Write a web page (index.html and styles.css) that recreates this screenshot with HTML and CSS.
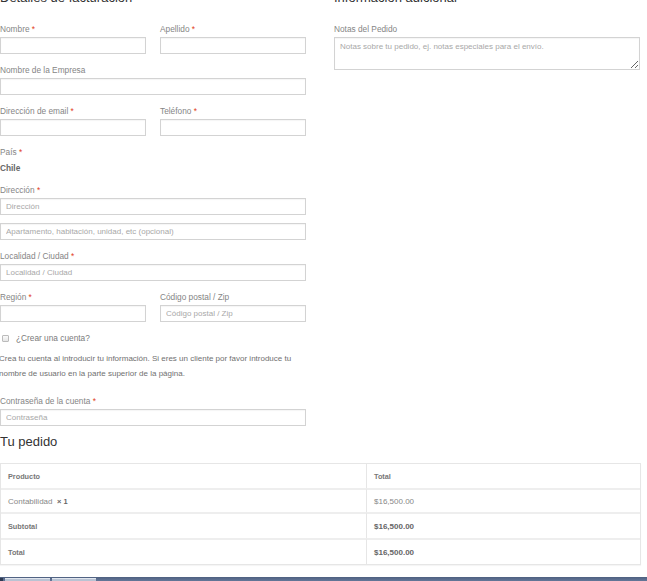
FILE: index.html
```html
<!DOCTYPE html>
<html lang="es">
<head>
  <meta charset="UTF-8">
  <meta name="viewport" content="width=device-width, initial-scale=1.0">
  <title>Finalizar compra</title>
  <link rel="stylesheet" href="styles.css">
</head>
<body>
  <div class="checkout">
    <!-- columnas: facturación / información adicional -->
    <div class="col-set">
      <div class="col billing">
        <h3>Detalles de facturación</h3>

        <div class="row-half">
          <p class="field">
            <label>Nombre <abbr>*</abbr></label>
            <input type="text">
          </p>
          <p class="field">
            <label>Apellido <abbr>*</abbr></label>
            <input type="text">
          </p>
        </div>

        <p class="field">
          <label>Nombre de la Empresa</label>
          <input type="text">
        </p>

        <div class="row-half">
          <p class="field">
            <label>Dirección de email <abbr>*</abbr></label>
            <input type="email">
          </p>
          <p class="field">
            <label>Teléfono <abbr>*</abbr></label>
            <input type="tel">
          </p>
        </div>

        <p class="field">
          <label>País <abbr>*</abbr></label>
          <strong class="country">Chile</strong>
        </p>

        <p class="field address">
          <label>Dirección <abbr>*</abbr></label>
          <input type="text" placeholder="Dirección">
          <input type="text" placeholder="Apartamento, habitación, unidad, etc (opcional)">
        </p>

        <p class="field">
          <label>Localidad / Ciudad <abbr>*</abbr></label>
          <input type="text" placeholder="Localidad / Ciudad">
        </p>

        <div class="row-half">
          <p class="field">
            <label>Región <abbr>*</abbr></label>
            <input type="text">
          </p>
          <p class="field">
            <label>Código postal / Zip</label>
            <input type="text" placeholder="Código postal / Zip">
          </p>
        </div>

        <p class="create-account">
          <input type="checkbox" id="createaccount">
          <label for="createaccount">¿Crear una cuenta?</label>
        </p>

        <p class="account-note">Crea tu cuenta al introducir tu información. Si eres un cliente por favor introduce tu nombre de usuario en la parte superior de la página.</p>

        <p class="field">
          <label>Contraseña de la cuenta <abbr>*</abbr></label>
          <input type="password" placeholder="Contraseña">
        </p>
      </div>

      <div class="col additional">
        <h3>Información adicional</h3>
        <p class="field">
          <label>Notas del Pedido</label>
          <textarea placeholder="Notas sobre tu pedido, ej. notas especiales para el envío."></textarea>
        </p>
      </div>
    </div>

    <!-- resumen del pedido -->
    <h3 class="order-title">Tu pedido</h3>
    <table class="shop-table">
      <thead>
        <tr>
          <th class="product-name">Producto</th>
          <th class="product-total">Total</th>
        </tr>
      </thead>
      <tbody>
        <tr>
          <td class="product-name">Contabilidad&nbsp; <strong>× 1</strong></td>
          <td class="product-total">$16,500.00</td>
        </tr>
      </tbody>
      <tfoot>
        <tr>
          <th>Subtotal</th>
          <td><strong>$16,500.00</strong></td>
        </tr>
        <tr>
          <th>Total</th>
          <td><strong>$16,500.00</strong></td>
        </tr>
      </tfoot>
    </table>
  </div>

  <!-- barra de tareas -->
  <div class="taskbar">
    <span class="task-start"></span>
    <span class="task-tab"></span>
    <span class="task-tab second"></span>
  </div>
</body>
</html>
```

FILE: styles.css
```css
body {
  margin: 0;
  padding: 0;
  overflow: hidden;
  background: #fff;
  font-family: "Liberation Sans", Arial, sans-serif;
  color: #777;
  height: 581px;
  display: flex;
  flex-direction: column;
}

.checkout {
  width: 641px;
}

h3 {
  margin: 0;
  font-size: 13px;
  line-height: 15px;
  font-weight: normal;
  color: #333;
}

/* columnas */
.col-set {
  display: flex;
  gap: 28px;
}

.col {
  width: 306px;
}

.col h3 {
  margin-top: -10px;
  margin-bottom: 18px;
}

.row-half {
  display: grid;
  grid-template-columns: 146px 146px;
  gap: 14px;
}

/* campos */
.field {
  margin: 0 0 10px;
}

.field label {
  display: block;
  font-size: 8.3px;
  line-height: 12px;
  margin-bottom: 2px;
  color: #858585;
}

abbr {
  color: #e2401c;
  text-decoration: none;
}

input[type="text"],
input[type="email"],
input[type="tel"],
input[type="password"],
textarea {
  display: block;
  box-sizing: border-box;
  width: 100%;
  height: 17px;
  margin: 0;
  padding: 0 5px;
  border: 1px solid #d3d3d3;
  box-shadow: inset 0 1px 1px rgba(0, 0, 0, 0.04);
  font-family: inherit;
  font-size: 8px;
  color: #555;
  background: #fff;
}

::placeholder {
  color: #a8a8a8;
}

textarea {
  height: 33px;
  padding: 4px 5px;
  line-height: 10px;
}

.country {
  display: block;
  font-size: 8.3px;
  line-height: 12px;
  margin-top: 4px;
  color: #666;
}

.address input + input {
  margin-top: 8px;
}

/* crear cuenta */
.create-account {
  display: flex;
  align-items: center;
  gap: 7px;
  margin: 0;
  padding-left: 2px;
  height: 12px;
  font-size: 8.3px;
  color: #7a7a7a;
}

.create-account input {
  appearance: none;
  margin: 0;
  width: 7px;
  height: 7px;
  border: 1px solid #bbb;
  border-radius: 1px;
  background: linear-gradient(#fafafa, #e6e6e6);
  box-sizing: border-box;
}

.account-note {
  margin: 7px 0 14px -1px;
  font-size: 8px;
  line-height: 15px;
  color: #707070;
}

/* pedido */
.order-title {
  margin-top: -2px;
  margin-bottom: 14px;
}

.shop-table {
  width: 641px;
  border: 1px solid #e6e6e6;
  border-collapse: separate;
  border-spacing: 0;
  box-shadow: 0 1px 1px rgba(0, 0, 0, 0.04);
  font-size: 8px;
  text-align: left;
}

.shop-table th,
.shop-table td {
  height: 24px;
  padding: 0 7px;
  border-top: 2px solid #eee;
  color: #888;
}

.shop-table thead th {
  border-top: 0;
  height: 24px;
}

.shop-table tbody td {
  height: 22px;
}

.shop-table th {
  font-size: 7.3px;
  font-weight: bold;
  color: #777;
}

.shop-table tr > :first-child {
  width: 351px;
}

.shop-table tr > :last-child {
  border-left: 1px solid #e6e6e6;
}

.shop-table td strong {
  color: #666;
}

.product-name strong {
  font-size: 7.5px;
}

/* barra de tareas */
.taskbar {
  margin-top: auto;
  height: 4px;
  display: flex;
  align-items: flex-end;
  gap: 2px;
  background: linear-gradient(#4e6080, #647799);
}

.task-start {
  width: 3px;
  height: 3px;
  background: #2d3a52;
}

.task-tab {
  width: 45px;
  height: 3px;
  background: #b9c3d3;
  border-top: 1px solid #dfe5ee;
  box-sizing: border-box;
}

.task-tab.second {
  width: 44px;
}
```
